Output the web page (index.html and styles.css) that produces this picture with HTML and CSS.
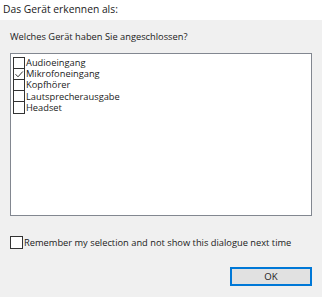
FILE: index.html
```html
<!DOCTYPE html>
<html>
<head>
<meta charset="utf-8">
<link rel="stylesheet" href="styles.css">
</head>
<body>
<div class="dialog">
  <div class="header">Das Gerät erkennen als:</div>
  <div class="content">
    <div class="question">Welches Gerät haben Sie angeschlossen?</div>
    <div class="listbox">
      <div class="item"><span class="cb"></span><span class="label">Audioeingang</span></div>
      <div class="item"><span class="cb checked"><svg viewBox="0 0 10 10" width="10" height="10"><path d="M1.5 5.2 L4 7.8 L8.8 2.5" fill="none" stroke="#333" stroke-width="1"/></svg></span><span class="label">Mikrofoneingang</span></div>
      <div class="item"><span class="cb"></span><span class="label">Kopfhörer</span></div>
      <div class="item"><span class="cb"></span><span class="label">Lautsprecherausgabe</span></div>
      <div class="item last"><span class="cb"></span><span class="label">Headset</span></div>
    </div>
    <div class="remember"><span class="cb2"></span><span>Remember my selection and not show this dialogue next time</span></div>
    <div class="buttons"><button class="ok">OK</button></div>
  </div>
</div>
</body>
</html>
```
FILE: styles.css
```css
html, body {
  margin: 0;
  padding: 0;
}
body {
  width: 322px;
  height: 297px;
  background: #f0f0f0;
  font-family: "Open Sans", "Noto Sans", sans-serif;
  font-size: 9.3px;
  color: #1a1a1a;
  overflow: hidden;
}
.header {
  background: #ffffff;
  height: 20px;
  line-height: 18px;
  padding-left: 3px;
  box-sizing: border-box;
  font-size: 10.3px;
}
.content {
  padding: 0 10px 0 10px;
}
.question {
  height: 33px;
  line-height: 14px;
  padding-top: 10px;
  box-sizing: border-box;
}
.listbox {
  background: #ffffff;
  border: 1px solid #828790;
  height: 163px;
  box-sizing: border-box;
  padding: 3px 0 0 2px;
}
.item {
  display: flex;
  align-items: center;
  height: 11.2px;
  line-height: 11.2px;
}
.cb {
  width: 10px;
  height: 11px;
  border: 1px solid #333;
  border-bottom: none;
  display: flex;
  align-items: center;
  justify-content: center;
  flex: none;
  background: #fff;
}
.item.last .cb {
  border-bottom: 1px solid #333;
}
.label {
  padding-left: 1px;
}
.remember {
  display: flex;
  align-items: center;
  margin-top: 20px;
  height: 12px;
  white-space: nowrap;
}
.cb2 {
  width: 11px;
  height: 11px;
  border: 1px solid #333;
  background: #fff;
  margin-right: 1px;
  flex: none;
}
.buttons {
  display: flex;
  justify-content: flex-end;
  margin-top: 19px;
}
.ok {
  width: 82px;
  height: 19px;
  background: #e1e1e1;
  border: 2px solid #0078d7;
  font-family: inherit;
  font-size: 9.6px;
  color: #1a1a1a;
  padding: 0;
  margin: 0;
}
```
